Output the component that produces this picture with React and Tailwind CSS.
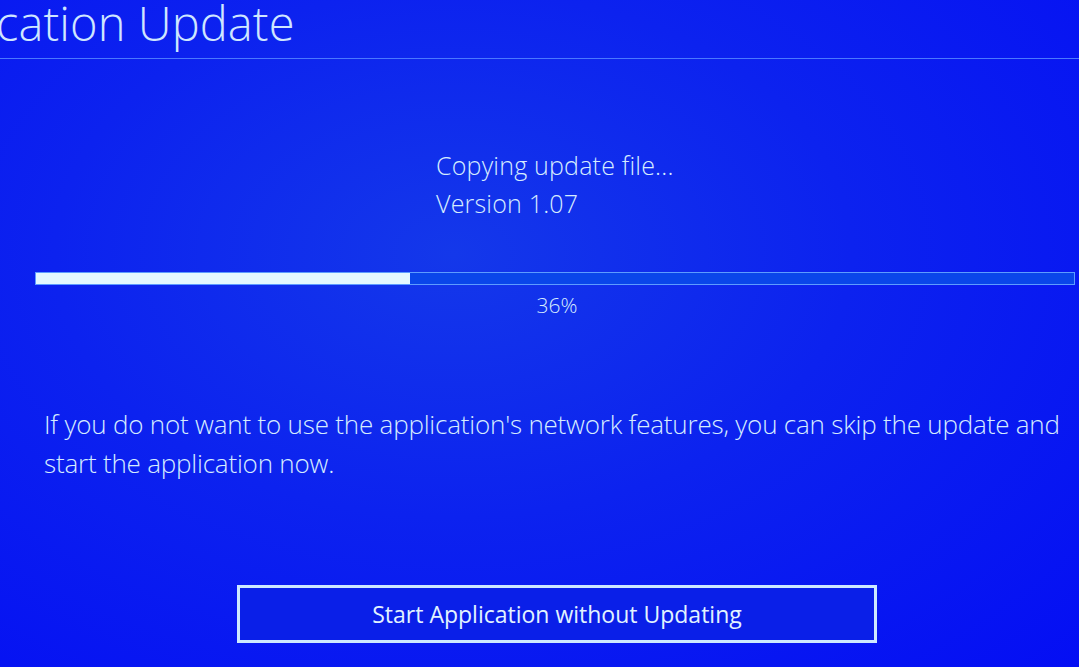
export default function App() {
  return (
    <div
      className="w-[1079px] h-[667px] overflow-hidden text-[#d6ecff]
                 bg-[radial-gradient(ellipse_at_42%_38%,#1438ea_0%,#0c22ef_45%,#040ef4_100%)]"
      style={{ fontFamily: '"Open Sans", "Noto Sans", sans-serif' }}
    >
      {/* header */}
      <div className="h-[59px] border-b border-[#4b78ff]">
        <h1 className="ml-[-4px] text-[47px] font-light leading-[46px] tracking-[0.1px] text-[#cfe6ff]">
          cation Update
        </h1>
      </div>

      {/* progress */}
      <div className="pl-[35px] pt-[87px]">
        <div className="ml-[401px] flex flex-col text-[25px] font-light leading-[38px] tracking-[0.2px]">
          <span>Copying update file...</span>
          <span>Version 1.07</span>
        </div>

        <div className="mt-[50px] h-[13px] w-[1040px] flex border border-[#5d9cff] bg-[#0a46ea]">
          <div className="h-full w-[36%] bg-[#e4f8ff]" />
        </div>
        <div className="w-[1044px] text-center text-[21px] font-light leading-[30px] mt-[5px]">36%</div>
      </div>

      {/* message */}
      <p className="mt-[85px] pl-[44px] text-[26px] font-light leading-[39px] tracking-[-0.2px] whitespace-nowrap">
        If you do not want to use the application's network features, you can skip the update and
        <br />
        start the application now.
      </p>

      {/* button */}
      <div className="mt-[102px] flex pl-[237px]">
        <button className="w-[640px] h-[58px] border-[3px] border-[#cde9ff] bg-[#0a1fe8] text-[23px] font-medium text-[#e2f3ff]">
          Start Application without Updating
        </button>
      </div>
    </div>
  );
}
